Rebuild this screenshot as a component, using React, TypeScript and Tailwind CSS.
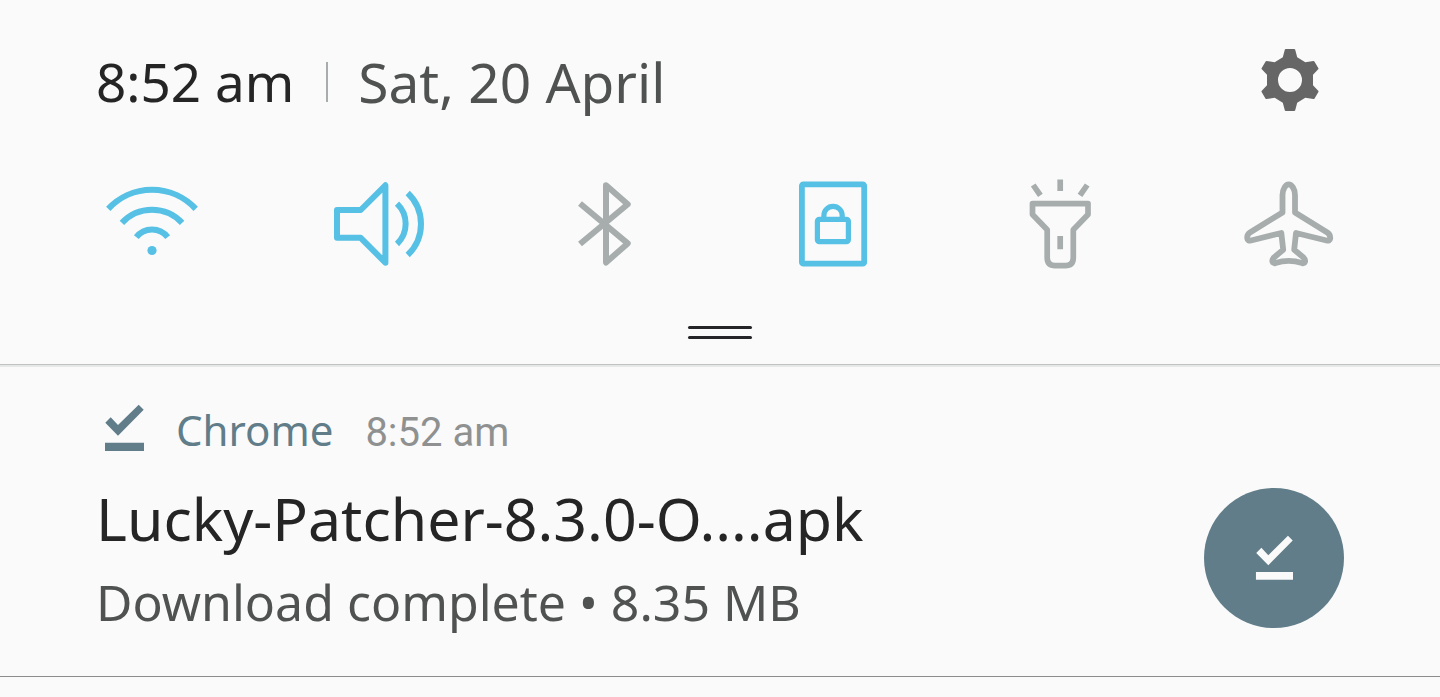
import React from 'react';

interface IconProps {
  className?: string;
}

const SettingsIcon: React.FC<IconProps> = ({ className }) => (
  <svg viewBox="0 0 64 64" fill="currentColor" fillRule="evenodd" className={className} aria-hidden="true">
    <path d="M27.800 1h8.400q.8 0 1 .8L39.200 9.300l8.100 4.900 8.100-1.200q.7-.1 1 .4l4 6.800q.3.600-.2 1.100L55 26.700v10.600l5.200 5.500q.5.500.2 1.100l-4 6.800q-.3.500-1 .4L47.300 49.800l-8.100 4.900-2 7.500q-.2.800-1 .8h-8.400q-.8 0-1-.8l-2-7.500-8.100-4.900-8.100 1.300q-.7.100-1-.4l-4-6.800q-.3-.6.2-1.100L9 37.300V26.700l-5.200-5.400q-.5-.5-.2-1.100l4-6.800q.3-.5 1-.4l8.100 1.200 8.100-4.900 2-7.500q.2-.8 1-.8zM32 20a12 12 0 1 0 0 24 12 12 0 0 0 0-24z" />
  </svg>
);

const WifiIcon: React.FC<IconProps> = ({ className }) => (
  <svg viewBox="0 0 96 96" fill="none" stroke="currentColor" strokeWidth="6" className={className} aria-hidden="true">
    <path d="M4.300 32.900A59.500 59.500 0 0 1 91.700 32.900" />
    <path d="M17.900 46.900A41 41 0 0 1 78.100 46.900" />
    <path d="M32.300 61.200A19.800 19.800 0 0 1 63.700 61.200" />
    <circle cx="48" cy="74.500" r="4.600" fill="currentColor" stroke="none" />
  </svg>
);

const SoundIcon: React.FC<IconProps> = ({ className }) => (
  <svg viewBox="0 0 96 96" fill="none" stroke="currentColor" strokeWidth="6" strokeLinejoin="round" className={className} aria-hidden="true">
    <path d="M6 34H29.700L54.400 9.300V86.700L29.700 61.800H6z" />
    <path d="M66 27.700A27.800 27.800 0 0 1 66 68" />
    <path d="M76.700 17A42.800 42.800 0 0 1 76.700 79" />
  </svg>
);

const BluetoothIcon: React.FC<IconProps> = ({ className }) => (
  <svg viewBox="0 0 96 96" fill="none" stroke="currentColor" strokeWidth="6" strokeLinejoin="round" className={className} aria-hidden="true">
    <path d="M22 27.500L69.700 67.400L48 86.500V9.300L69.700 28.300L22 68" />
  </svg>
);

const RotationLockIcon: React.FC<IconProps> = ({ className }) => (
  <svg viewBox="0 0 96 96" fill="none" stroke="currentColor" className={className} aria-hidden="true">
    <rect x="15.900" y="8.300" width="62.300" height="79.400" rx="1.500" strokeWidth="5.800" />
    <rect x="31.400" y="43.300" width="31" height="22.400" rx="2" strokeWidth="5.200" />
    <path d="M37.900 43V39.500A9.100 9.100 0 0 1 56.200 39.500V43" strokeWidth="5.200" />
  </svg>
);

const FlashlightIcon: React.FC<IconProps> = ({ className }) => (
  <svg viewBox="0 0 96 96" fill="none" stroke="currentColor" strokeWidth="5.700" className={className} aria-hidden="true">
    <path d="M47.200 3.500V15M20.200 9L27.400 19.400M74.200 9L67 19.400M47.200 60V73.200" />
    <path d="M19.500 27.700H75V38.500L60.300 53.700V81.500Q60.300 89.700 52.300 89.700H42.200Q34.200 89.700 34.200 81.500V53.700L19.500 38.500z" strokeLinejoin="round" />
  </svg>
);

const AirplaneIcon: React.FC<IconProps> = ({ className }) => (
  <svg viewBox="0 0 96 96" fill="none" stroke="currentColor" strokeWidth="5.800" strokeLinejoin="round" className={className} aria-hidden="true">
    <path d="M48.700 8.300C45.800 8.300 42.500 13 42.500 19V36.500L10 56.500Q6.800 58.500 7.300 62.500Q7.700 65.200 11 64.500L41.300 57L43.200 73.700L34 81.500Q31.800 83.500 32.500 85.800Q33.200 87.600 35.500 87.100Q48.700 82.800 62 87.100Q64.300 87.600 65 85.800Q65.600 83.500 63.500 81.500L54.200 73.700L56 57L86.500 64.500Q89.800 65.200 90.200 62.500Q90.500 58.500 87.300 56.500L55 36.500V19C55 13 51.600 8.300 48.700 8.300z" />
  </svg>
);

const DownloadDoneIcon: React.FC<IconProps> = ({ className }) => (
  <svg viewBox="0 0 40 48" fill="currentColor" className={className} aria-hidden="true">
    <path d="M1.300 18.700L6.700 13.300L14 21L34.700.7L39.700 5.700L14 31.700z" />
    <path d="M1 38.700H40V47H1z" />
  </svg>
);

const toggles = [
  { label: 'Wi-Fi', icon: WifiIcon, on: true },
  { label: 'Sound', icon: SoundIcon, on: true },
  { label: 'Bluetooth', icon: BluetoothIcon, on: false },
  { label: 'Portrait', icon: RotationLockIcon, on: true },
  { label: 'Flashlight', icon: FlashlightIcon, on: false },
  { label: 'Aeroplane mode', icon: AirplaneIcon, on: false },
];

const App: React.FC = () => {
  return (
    <div className="min-h-screen bg-[#fafafa] font-['Noto_Sans',sans-serif] text-[#252525]">
      {/* Quick settings */}
      <header className="border-b border-[#c0c2c2] pt-12 shadow-[0_2px_0_#e6e8e8]">
        <div className="flex items-start justify-between pl-24 pr-[118px]">
          <div className="flex h-17 items-center leading-17">
            <time className="text-[53px]">8:52 am</time>
            <span className="mr-[30px] ml-8 h-10 w-0.5 bg-[#a7adad]" />
            <span className="text-[55px] text-[#505252]">Sat, 20 April</span>
          </div>
          <button type="button" aria-label="Settings" className="text-[#666]">
            <SettingsIcon className="h-16 w-16" />
          </button>
        </div>

        <div className="mt-15 flex justify-between px-[104px]">
          {toggles.map((item) => {
            const Icon = item.icon;
            return (
              <button
                key={item.label}
                type="button"
                aria-label={item.label}
                aria-pressed={item.on}
                className={item.on ? 'text-[#56c0e5]' : 'text-[#a7adad]'}
              >
                <Icon className="h-24 w-24" />
              </button>
            );
          })}
        </div>

        <button type="button" aria-label="Expand" className="mx-auto mt-[54px] mb-[25px] flex w-16 flex-col gap-[7px]">
          <span className="h-[3px] w-full rounded-full bg-[#252528]" />
          <span className="h-[3px] w-full rounded-full bg-[#252528]" />
        </button>
      </header>

      {/* Notification */}
      <main>
        <article className="flex items-end justify-between border-b border-[#8c8c8c] px-24 pt-[37px] pb-12">
          <div className="min-w-0">
            <div className="flex items-start">
              <DownloadDoneIcon className="mt-0.5 ml-2 h-12 w-10 text-[#607d89]" />
              <div className="ml-8 flex h-14 items-baseline gap-8 leading-14">
                <span className="text-[42px] text-[#607d89]">Chrome</span>
                <time className="font-['Roboto',sans-serif] text-[40px] text-[#8f9191]">8:52 am</time>
              </div>
            </div>
            <h2 className="mt-5 text-[59px] leading-20">Lucky-Patcher-8.3.0-O....apk</h2>
            <p className="mt-[18px] text-[50px] leading-13 text-[#505252]">Download complete • 8.35 MB</p>
          </div>
          <div className="flex h-[140px] w-[140px] shrink-0 items-center justify-center rounded-full bg-[#607d89] text-[#fafafa]">
            <DownloadDoneIcon className="h-[46px] w-[38px]" />
          </div>
        </article>
      </main>
    </div>
  );
};

export default App;
